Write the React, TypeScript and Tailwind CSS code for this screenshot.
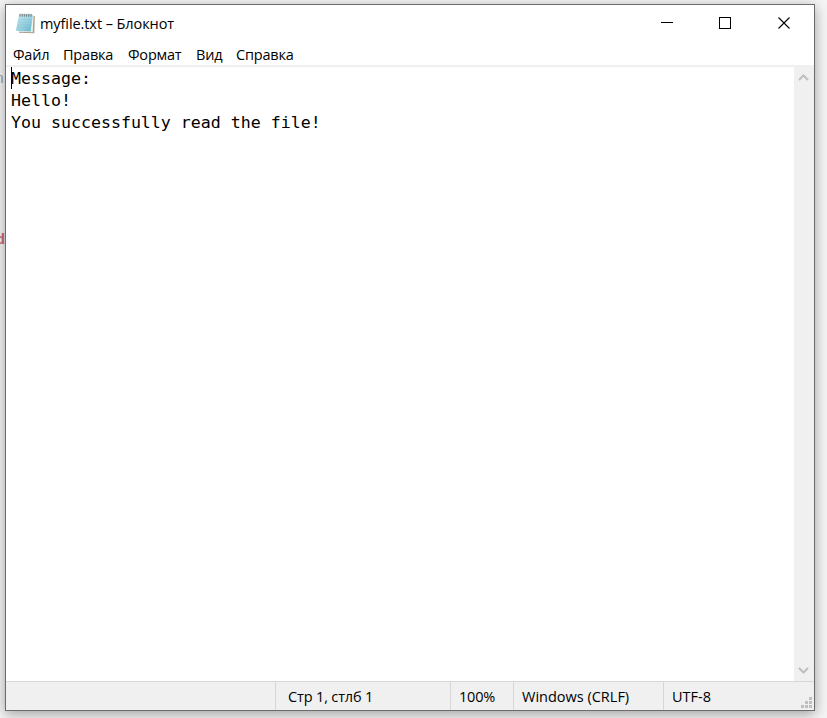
import React from "react";

const menu = [
  { label: "Файл", box: "w-[50px]" },
  { label: "Правка", box: "w-[65px]" },
  { label: "Формат", box: "w-[68px]" },
  { label: "Вид", box: "w-[40px]" },
  { label: "Справка", box: "w-[70px]" },
];

const lines = ["Message:", "Hello!", "You successfully read the file!"];

function NotepadIcon() {
  return (
    <svg width="22" height="24" viewBox="0 0 22 24" className="block shrink-0">
      <defs>
        <linearGradient id="page" x1="0" y1="0" x2="1" y2="1">
          <stop offset="0" stopColor="#c4e9f0" />
          <stop offset="0.5" stopColor="#9bd2e0" />
          <stop offset="1" stopColor="#62b5cc" />
        </linearGradient>
      </defs>
      <path d="M5 4.5 L19.8 4 L19.3 21.3 L4 20.8 Z" fill="#a99d87" />
      <path d="M4.5 4 L18.6 3.5 L17.8 20.3 L3 19.8 Z" fill="#e9eee9" />
      <path d="M4 3 L17.8 3 L15.6 19.5 L0.8 18.8 Z" fill="url(#page)" />
      <path d="M3.5 7.5H16.5M3 10H16M2.5 12.5H15.6M2 15H15.2" stroke="#7fbfd2" strokeWidth="0.6" opacity="0.5" />
      <path d="M5 2V4.6M7.2 2V4.6M9.4 2V4.6M11.6 2V4.6M13.8 2V4.6M16 2V4.6" stroke="#66777b" strokeWidth="1" />
      <path d="M4.5 2.3H17" stroke="#98a7a9" strokeWidth="0.8" />
    </svg>
  );
}

function TitleBar() {
  return (
    <div className="flex h-[38px] items-center">
      <div className="flex h-full flex-1 items-center pl-[9px]">
        <NotepadIcon />
        <span className="pl-[3px] text-[14.5px] leading-[20px] tracking-[-0.08px]">myfile.txt – Блокнот</span>
      </div>
      <svg width="176" height="38" viewBox="0 0 176 38" fill="none" stroke="#000" shapeRendering="crispEdges" className="block shrink-0">
        <path d="M23 17.5H35" />
        <rect x="81.5" y="12.5" width="11" height="11" />
        <path d="M140.5 12.5L151.5 23.5M151.5 12.5L140.5 23.5" shapeRendering="auto" strokeWidth="1.1" />
      </svg>
    </div>
  );
}

function ScrollBar() {
  return (
    <div className="flex w-[20px] flex-col items-center justify-between bg-[#f0f0f0] pr-px">
      <svg width="19" height="20" viewBox="0 0 19 20" fill="none" stroke="#bfbfbf" strokeWidth="2" className="block">
        <path d="M5 13L9.5 8.5L14 13" />
      </svg>
      <svg width="19" height="20" viewBox="0 0 19 20" fill="none" stroke="#bfbfbf" strokeWidth="2" className="block">
        <path d="M5 7L9.5 11.5L14 7" />
      </svg>
    </div>
  );
}

function StatusBar() {
  return (
    <div className="flex h-[29px] border-t border-[#d7d7d7] bg-[#f0f0f0] text-[14.5px] leading-[29px]">
      <div className="w-[270px] border-r border-[#d7d7d7]" />
      <div className="w-[175px] border-r border-[#d7d7d7] pl-[12px] tracking-[-0.15px]">Стр 1, стлб 1</div>
      <div className="w-[63px] border-r border-[#d7d7d7] pl-[8px] tracking-[-0.2px]">100%</div>
      <div className="w-[150px] border-r border-[#d7d7d7] pl-[8px]">Windows (CRLF)</div>
      <div className="flex-1 pl-[8px]">UTF-8</div>
      <svg width="14" height="28" viewBox="0 0 14 28" fill="#bfbfbf" className="block shrink-0">
        <path d="M9 15h3v3h-3zM5 19h3v3h-3zM9 19h3v3h-3zM1 23h3v3h-3zM5 23h3v3h-3zM9 23h3v3h-3z" />
      </svg>
    </div>
  );
}

export default function App() {
  return (
    <div className="relative h-[718px] w-[827px] overflow-hidden bg-[#f4f4f4] pl-[5px] pt-[4px] font-['Open_Sans','Noto_Sans',sans-serif] text-black">
      <span className="absolute left-[-5px] top-[70px] font-['Liberation_Mono',monospace] text-[15px] leading-[20px] text-[#a0a0a0]">n</span>
      <span className="absolute left-[-4px] top-[231px] font-['Liberation_Mono',monospace] text-[15px] font-bold leading-[20px] text-[#c96a72]">d</span>
      <div className="relative flex h-[707px] w-[810px] flex-col border border-[#6b6b6b] bg-white shadow-[0_3px_12px_rgba(0,0,0,0.35)]">
        <TitleBar />
        <div className="flex h-[24px] items-end border-b-2 border-[#f0f0f0] pl-[7px] text-[14.5px] leading-[20px] tracking-[-0.2px]">
          {menu.map((m) => (
            <span key={m.label} className={`${m.box} whitespace-nowrap`}>{m.label}</span>
          ))}
        </div>
        <div className="flex min-h-0 flex-1">
          <div className="relative flex-1 pl-[5px] pt-px font-['DejaVu_Sans_Mono',monospace] text-[16.6px] leading-[22px]">
            <div className="absolute left-[5px] top-0 h-[22px] w-px bg-black" />
            {lines.map((l) => (
              <div key={l} className="whitespace-pre">{l}</div>
            ))}
          </div>
          <ScrollBar />
        </div>
        <StatusBar />
      </div>
    </div>
  );
}
